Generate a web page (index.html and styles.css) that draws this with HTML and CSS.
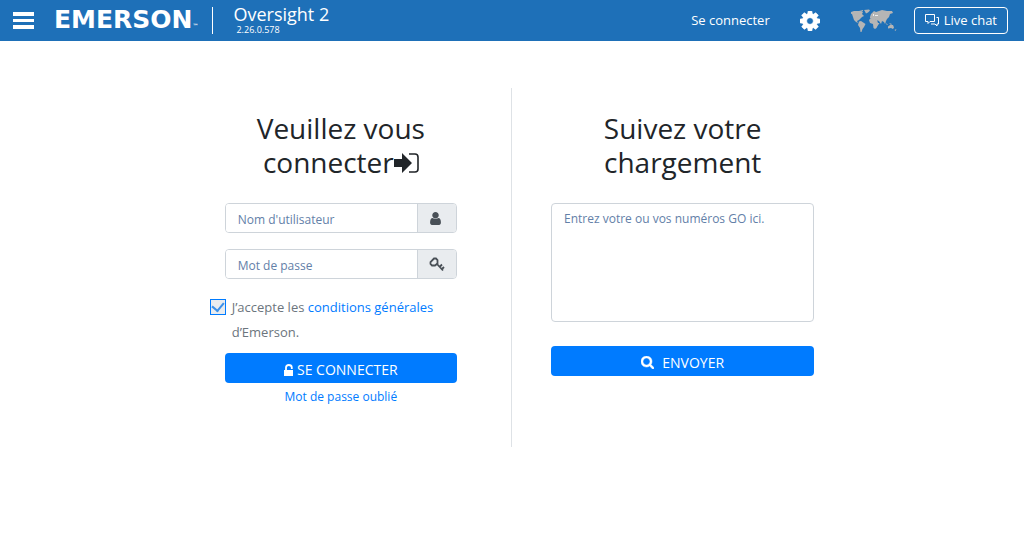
FILE: index.html
```html
<!DOCTYPE html>
<html lang="fr">
<head>
<meta charset="utf-8">
<meta name="viewport" content="width=device-width, initial-scale=1">
<title>Oversight 2</title>
<link rel="stylesheet" href="styles.css">
</head>
<body>
<header class="topbar">
  <button class="menu" type="button" aria-label="Menu"><svg viewBox="0 0 22 17"><path d="M1 0h21v4H1zM1 7h21v3H1zM1 13h21v4H1z" fill="currentColor"/></svg></button>
  <a class="logo" href="#">EMERSON<span class="tm">™</span></a>
  <span class="rule"></span>
  <div class="product"><span class="product-name">Oversight 2</span><span class="version">2.26.0.578</span></div>
  <nav class="tools">
    <a class="login-link" href="#">Se connecter</a>
    <button class="cog" type="button" aria-label="Paramètres"><svg viewBox="128 128 1536 1536"><path fill="currentColor" stroke="currentColor" stroke-width="50" d="M1152 896q0-106-75-181t-181-75-181 75-75 181 75 181 181 75 181-75 75-181zm512-109v222q0 12-8 23t-20 13l-185 28q-19 54-39 91 35 50 107 138 10 12 10 25t-9 23q-27 37-99 108t-94 71q-12 0-26-9l-138-108q-44 23-91 38-16 136-29 186-7 28-36 28h-222q-14 0-24.500-8.500t-11.500-21.500l-28-184q-49-16-90-37l-141 107q-10 9-25 9-14 0-25-11-126-114-165-168-7-10-7-23 0-12 8-23 15-21 51-66.500t54-70.500q-27-50-41-99l-183-27q-13-2-21-12.500t-8-23.500v-222q0-12 8-23t19-13l186-28q14-46 39-92-40-57-107-138-10-12-10-24 0-10 9-23 26-36 98.500-107.500t94.500-71.500q13 0 26 10l138 107q44-23 91-38 16-136 29-186 7-28 36-28h222q14 0 24.500 8.500t11.500 21.500l28 184q49 16 90 37l142-107q9-9 24-9 13 0 25 10 129 119 165 170 7 8 7 22 0 12-8 23-15 21-51 66.500t-54 70.500q26 50 41 98l183 28q13 2 21 12.500t8 23.500z"/></svg></button>
    <button class="world" type="button" aria-label="Langue"><svg viewBox="0 0 46 24"><g fill="#b5b5b5"><path d="M0 3l3-1 6 0 3 1-1 2 2 2-2 1-2 2-1 1-2 1 1 2-2-1-2-2-1-3-1-3-3-1z"/><path d="M8 2l4-1v1l-2 1zM13 1l5-.500 1 1-2 2-2 1-1-2z"/><path d="M8 12.500l2-.500 3 2 1.500 1-1.500 3-1.500 2-1 3-1 0-.500-4-2-3z"/><path d="M19 8l1-3 3-3 2 1 3-1 3-1 5 1 5 0 1 2-3 1-1 3-2 2-1 2-1 3-1-2-2-1-1 3-2-3-3-1-2-1-2 0-2-1z"/><path d="M18 11l2-2 4 1 2 1 1 3h1.500l-2 3-1 2-1.500 1-1.500-1-.500-4-3-1z"/><path d="M37 17.500l2-1.500 3 0 1 2.500-1 1.500-2-1-3 .500zM34 13l3 3-1 0zM38 14l3 1-1 1zM43.500 21l2-1-1 2z"/></g><path d="M24 6h3v1h-3zM22 5h1v2h-1z" fill="#eee"/></svg></button>
    <button class="chat" type="button"><svg viewBox="0 0 14 14" fill="none" stroke="currentColor"><path d="M.500 1.500h9v7H5l-2 2v-2H.500z"/><path d="M11.500 4.500h2v6.500H12v2l-2-2H6"/></svg>Live chat</button>
  </nav>
</header>
<main class="panels">
  <section class="panel panel-login">
    <h1 class="title">Veuillez vous connecter<svg class="enter" viewBox="0 0 25 20"><path d="M0 6h8V0l10 10-10 10v-6H0z" fill="currentColor"/><path d="M15 1h6q3 0 3 3v12q0 3-3 3h-6" fill="none" stroke="currentColor" stroke-width="1.600"/></svg></h1>
    <form>
      <div class="field"><input type="text" placeholder="Nom d'utilisateur" aria-label="Nom d'utilisateur"><span class="addon"><svg class="icon" viewBox="128 128 1536 1536"><path fill="currentColor" d="M1536 1399q0 109-62.500 187t-150.500 78h-854q-88 0-150.500-78t-62.500-187q0-85 8.500-160.500t31.500-152 58.500-131 94-89 134.500-34.500q131 128 313 128t313-128q76 0 134.500 34.500t94 89 58.500 131 31.500 152 8.500 160.500zm-256-887q0 159-112.500 271.500t-271.500 112.500-271.500-112.500-112.500-271.500 112.500-271.500 271.500-112.500 271.500 112.500 112.500 271.500z"/></svg></span></div>
      <div class="field"><input type="password" placeholder="Mot de passe" aria-label="Mot de passe"><span class="addon"><svg class="key" viewBox="0 0 16 15" fill="none" stroke="currentColor" stroke-width="1.800"><path d="M5 1.500h2l1.500 1.500v3.500L6 8.500H3L1.500 7V5z"/><path d="M7.500 6.500l6.500 7M10.500 10l2.500-2.500M12.500 12.500l2.500-2.500"/></svg></span></div>
      <div class="terms"><input type="checkbox" id="terms" checked><label for="terms">J’accepte les <a href="#">conditions générales</a> d’Emerson.</label></div>
      <button class="primary" type="submit"><svg class="unlock" viewBox="0 0 10 12"><path d="M0 6h9v6H0z" fill="currentColor"/><path d="M2 6V3.500Q2 1 4.800 1T7.800 3.500V5" fill="none" stroke="currentColor" stroke-width="1.800"/></svg>SE CONNECTER</button>
      <a class="forgot" href="#">Mot de passe oublié</a>
    </form>
  </section>
  <section class="panel panel-track">
    <h1 class="title">Suivez votre chargement</h1>
    <form>
      <textarea placeholder="Entrez votre ou vos numéros GO ici." aria-label="Numéros GO"></textarea>
      <button class="primary send" type="submit"><svg class="icon" viewBox="64 128 1664 1664"><path fill="currentColor" stroke="currentColor" stroke-width="60" d="M1216 832q0-185-131.500-316.500t-316.500-131.500-316.500 131.500-131.500 316.500 131.500 316.500 316.500 131.500 316.500-131.500 131.500-316.500zm512 832q0 52-38 90t-90 38q-54 0-90-38l-343-342q-179 124-399 124-143 0-273.500-55.500t-225-150-150-225-55.500-273.500 55.500-273.500 150-225 225-150 273.500-55.500 273.500 55.500 225 150 150 225 55.500 273.500q0 220-124 399l343 343q37 37 37 90z"/></svg>ENVOYER</button>
    </form>
  </section>
</main>
</body>
</html>
```
FILE: styles.css
```css
* { box-sizing: border-box; }
body { margin: 0; background: #fff; color: #212529; font: 13px/20px "Open Sans", sans-serif; }
button, input, textarea { font: inherit; margin: 0; }
button { cursor: pointer; }
svg { display: block; flex: none; }
a { color: #007bff; text-decoration: none; }

.topbar { display: flex; align-items: center; min-height: 41px; padding: 0 16px 0 12px; background: #1e70b8; color: #fff; }
.topbar button { padding: 0; border: 0; background: none; color: inherit; }
.menu svg { width: 22px; height: 17px; }
.logo { display: flex; align-items: flex-end; margin-left: 20px; padding-bottom: 2px; color: #fff; font: bold 25px/28px "DejaVu Sans", sans-serif; }
.tm { font-size: 6px; line-height: 16px; }
.rule { width: 1px; height: 27px; margin: 0 20px 0 14px; background: #fff; }
.product { display: flex; flex-direction: column; padding-bottom: 2px; }
.product-name { font-size: 18px; line-height: 20px; }
.version { padding-left: 3px; font-size: 9px; line-height: 12px; font-weight: 500; }
.tools { display: flex; align-items: center; margin-left: auto; }
.login-link { margin-right: 30px; padding-bottom: 2px; color: #fff; }
.cog { margin-right: 31px; }
.cog svg { width: 20px; height: 20px; }
.world { margin-right: 17px; }
.world svg { width: 46px; height: 24px; }
.topbar .chat { display: flex; align-items: center; gap: 5px; height: 27px; padding: 0 10px 2px; border: 1px solid #fff; border-radius: 4px; }
.chat svg { width: 14px; height: 14px; }

.panels { display: flex; justify-content: center; padding-top: 47px; }
.panel { width: 33.333%; min-height: 359px; padding-top: 23px; }
.panel-login { padding-left: 54px; padding-right: 54px; border-right: 1px solid #dee2e6; }
.panel-track { padding-left: 39px; padding-right: 39px; }
.title { margin: 0 auto 24px; max-width: 200px; font-size: 28px; line-height: 34px; font-weight: 400; text-align: center; }
.enter { display: inline-block; width: 25px; height: 20px; }
.icon { width: 13px; height: 13px; }

.field { display: flex; height: 30px; margin-bottom: 16px; border: 1px solid #ced4da; border-radius: 4px; overflow: hidden; }
.field input { flex: 1; min-width: 0; padding: 4px 12px 0; border: 0; font-size: 12px; color: #495057; }
.addon { display: flex; align-items: center; width: 39px; padding-left: 11px; border-left: 1px solid #ced4da; background: #e9ecef; color: #495057; }
.key { width: 16px; height: 15px; }
::placeholder { color: #6380a8; opacity: 1; }

.terms { display: flex; align-items: flex-start; gap: 6px; margin: 0 0 8px -15px; color: #6c757d; line-height: 25px; }
.terms input { appearance: none; flex: none; width: 16px; height: 16px; margin-top: 4px; border: 1px solid #007bff; background: #e9ecef; display: grid; place-items: center; }
.terms input:checked::before { content: ""; width: 6px; height: 9px; margin-bottom: 3px; border: solid #3c90e8; border-width: 0 2px 2px 0; transform: rotate(40deg); }

.primary { display: flex; align-items: center; justify-content: center; gap: 3px; width: 100%; height: 30px; padding: 3px 0 0; border: 0; border-radius: 4px; background: #007bff; color: #fff; font-size: 14px; }
.unlock { width: 10px; height: 12px; }
.send { gap: 8px; }
.forgot { display: block; margin-top: 4px; font-size: 12px; text-align: center; }
textarea { display: block; width: 100%; height: 119px; margin-bottom: 24px; padding: 5px 12px; border: 1px solid #ced4da; border-radius: 4px; font-size: 12px; resize: none; }
```
